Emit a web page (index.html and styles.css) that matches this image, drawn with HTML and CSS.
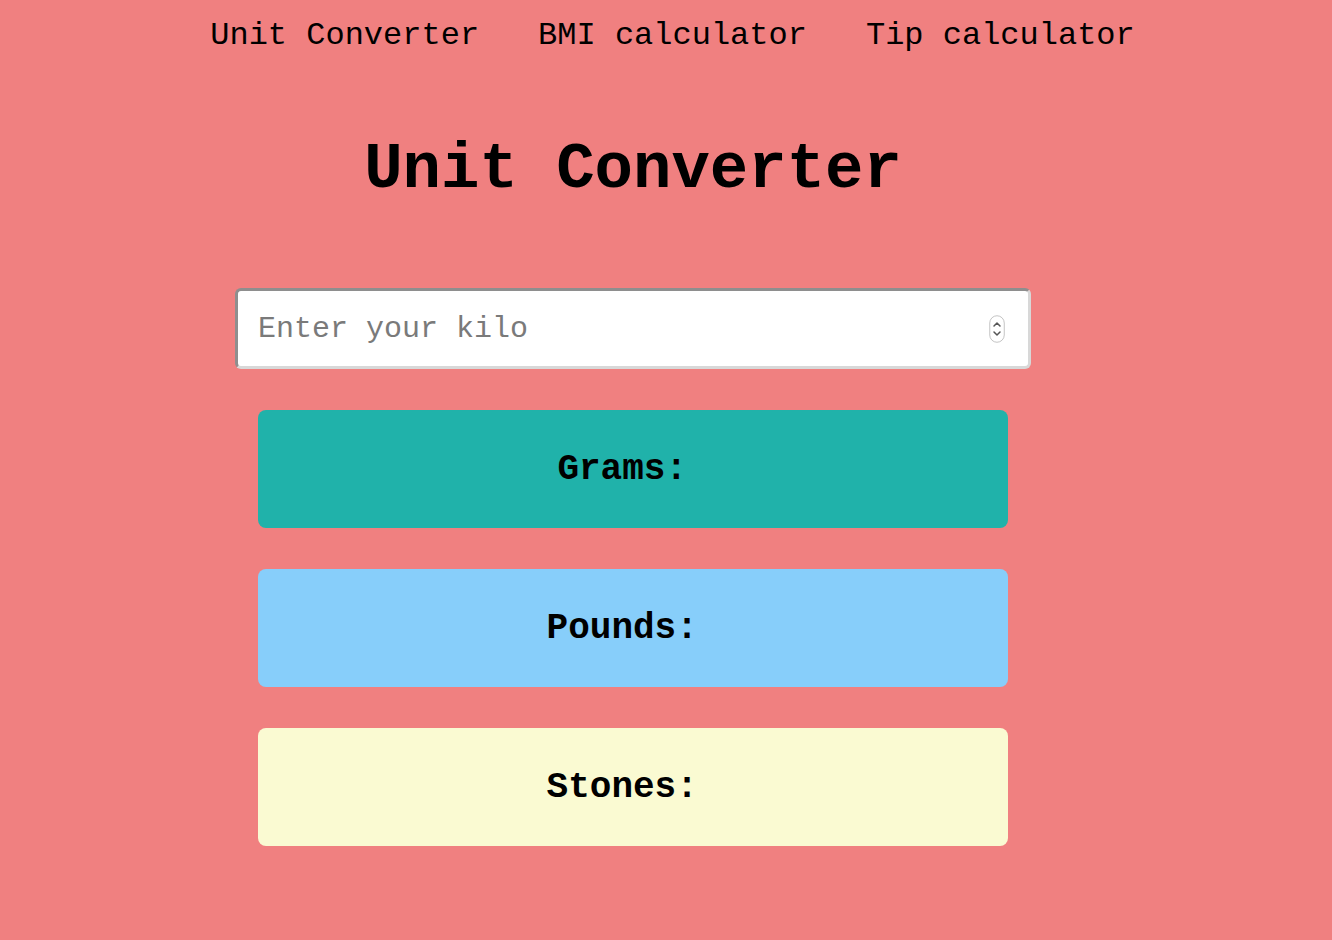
FILE: index.html
```html
<!DOCTYPE html>
<html lang="en">
<head>
<meta charset="utf-8">
<title>Unit Converter</title>
<link rel="stylesheet" href="styles.css">
</head>
<body>
<nav class="nav">
  <a class="nav-link" href="#">Unit Converter</a>
  <a class="nav-link" href="#">BMI calculator</a>
  <a class="nav-link" href="#">Tip calculator</a>
</nav>
<main class="main">
  <h1 class="title">Unit Converter</h1>
  <div class="field">
    <input class="kilo-input" type="number" placeholder="Enter your kilo">
    <svg class="spinner" width="16" height="28" viewBox="0 0 16 28" aria-hidden="true">
      <rect x="0.75" y="0.75" width="14.5" height="26.5" rx="7.25" fill="#fff" stroke="#c4c4c4" stroke-width="1"/>
      <path d="M5 11 L8 8 L11 11" fill="none" stroke="#555" stroke-width="1.5" stroke-linecap="round" stroke-linejoin="round"/>
      <path d="M5 17 L8 20 L11 17" fill="none" stroke="#555" stroke-width="1.5" stroke-linecap="round" stroke-linejoin="round"/>
    </svg>
  </div>
  <div class="results">
    <div class="result result-grams">Grams:&nbsp;<span class="value"></span></div>
    <div class="result result-pounds">Pounds:&nbsp;<span class="value"></span></div>
    <div class="result result-stones">Stones:&nbsp;<span class="value"></span></div>
  </div>
</main>
</body>
</html>
```

FILE: styles.css
```css
html, body {
  margin: 0;
  padding: 0;
}

body {
  background: #f08080;
  font-family: "Courier New", "Liberation Mono", monospace;
  color: #000;
  min-height: 940px;
}

.nav {
  display: flex;
  justify-content: center;
  gap: 59px;
  padding: 17px 0 0 13px;
}

.nav-link {
  font-size: 32px;
  line-height: normal;
  color: #000;
  text-decoration: none;
}

.main {
  display: flex;
  flex-direction: column;
  align-items: center;
  padding-right: 66px;
}

.title {
  font-size: 64px;
  font-weight: bold;
  line-height: normal;
  margin: 80px 0 0;
}

.field {
  position: relative;
  margin-top: 82px;
}

.kilo-input {
  box-sizing: border-box;
  width: 796px;
  height: 81px;
  padding: 0 20px;
  font-family: "Courier New", "Liberation Mono", monospace;
  font-size: 30px;
  color: #000;
  background: #fff;
  border: 3px solid;
  border-color: #8e8e8e #d8d8d8 #d8d8d8 #8e8e8e;
  border-radius: 6px;
  outline: none;
  -moz-appearance: textfield;
}

.kilo-input::placeholder {
  color: #7a7a7a;
}

.kilo-input::-webkit-inner-spin-button,
.kilo-input::-webkit-outer-spin-button {
  -webkit-appearance: none;
  margin: 0;
}

.spinner {
  position: absolute;
  right: 26px;
  top: 27px;
}

.results {
  display: flex;
  flex-direction: column;
  gap: 41px;
  margin-top: 41px;
}

.result {
  width: 750px;
  height: 118px;
  border-radius: 8px;
  display: flex;
  align-items: center;
  justify-content: center;
  font-size: 36px;
  font-weight: bold;
  white-space: pre;
}

.result-grams {
  background: #20b2aa;
}

.result-pounds {
  background: #87cefa;
}

.result-stones {
  background: #fafad2;
}
```
